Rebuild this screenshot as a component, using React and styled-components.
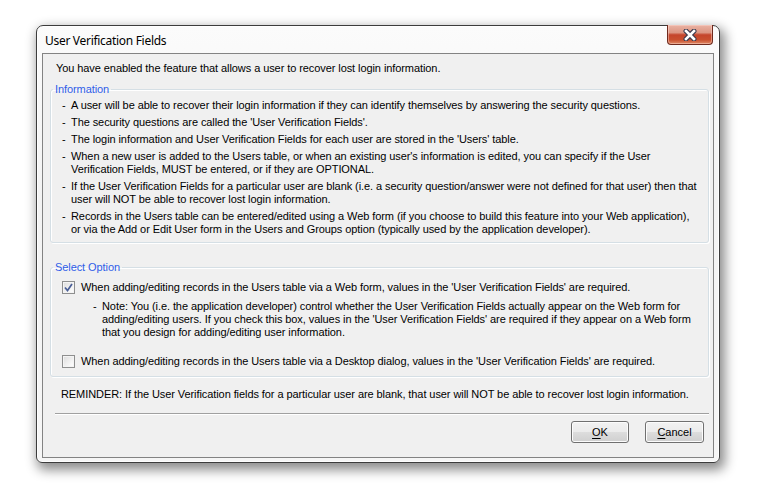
import React from 'react';
import styled, { createGlobalStyle } from 'styled-components';

const GlobalStyle = createGlobalStyle`
  html, body {
    margin: 0;
    padding: 0;
    background: #ffffff;
  }
  body {
    font-family: "Liberation Sans", Arial, sans-serif;
    font-size: 11px;
    letter-spacing: -0.08px;
    color: #000;
  }
`;

const Page = styled.div`
  box-sizing: border-box;
  width: 765px;
  height: 494px;
  padding: 25px 0 0 36px;
  background: #ffffff;
`;

const Window = styled.div`
  box-sizing: border-box;
  width: 684px;
  border: 1px solid #3c3c3c;
  border-radius: 7px 7px 6px 6px;
  background: linear-gradient(#fbfbfb, #f3f3f3 40%, #f6f6f6);
  box-shadow: inset 0 0 0 1px rgba(255, 255, 255, 0.9),
    3px 5px 12px 2px rgba(0, 0, 0, 0.45);
  padding-bottom: 4px;
`;

const TitleBar = styled.div`
  display: flex;
  align-items: flex-start;
  height: 27px;
  padding-left: 8px;
`;

const Title = styled.div`
  margin-top: 7px;
  font-family: "Noto Sans", "Liberation Sans", sans-serif;
  font-size: 12px;
  letter-spacing: -0.3px;
  line-height: 15px;
  color: #000;
`;

const CloseButton = styled.div`
  display: flex;
  align-items: center;
  justify-content: center;
  width: 46px;
  height: 20px;
  margin: -1px 6px 0 auto;
  box-sizing: border-box;
  border: 1px solid #6e2a1e;
  border-top: none;
  border-radius: 0 0 4px 4px;
  background: linear-gradient(
    #eab3a4 0%,
    #dc9683 40%,
    #c5452c 52%,
    #c9502f 78%,
    #e08a66 100%
  );
  box-shadow: inset 0 0 0 1px rgba(255, 220, 210, 0.45);
`;

const Client = styled.div`
  display: flex;
  flex-direction: column;
  margin: 0 5px;
  border: 1px solid #838383;
  background: #f0f0f0;
  padding: 8px 4px 14px 7px;
`;

const Intro = styled.div`
  padding-left: 6px;
  line-height: 13px;
`;

const Group = styled.fieldset`
  margin: ${(p) => p.$top}px 0 0 0;
  padding: ${(p) => p.$pad};
  border: 1px solid #d5dfe5;
  border-radius: 3px;
  box-shadow: inset 1px 1px 0 #ffffff, 1px 1px 0 #ffffff;
  display: flex;
  flex-direction: column;
`;

const Legend = styled.legend`
  margin-left: -9px;
  padding: 0 2px;
  line-height: 13px;
  color: #2f5ee8;
`;

const ItemList = styled.div`
  display: flex;
  flex-direction: column;
  gap: 4px;
`;

const Item = styled.div`
  display: flex;
  line-height: 13px;
  margin-left: ${(p) => p.$indent || 0}px;
  margin-top: ${(p) => p.$top || 0}px;
`;

const Dash = styled.span`
  flex: none;
  width: 9px;
`;

const OptionRow = styled.label`
  display: flex;
  align-items: center;
  gap: 6px;
  line-height: 13px;
  margin-top: ${(p) => p.$top}px;
`;

const Box = styled.span`
  flex: none;
  box-sizing: border-box;
  width: 13px;
  height: 13px;
  border: 1px solid #8e8f8f;
  background: linear-gradient(135deg, #dcdcdc, #f6f6f6 70%, #ffffff);
  box-shadow: inset 0 0 0 1px #f4f4f4;
  display: flex;
  align-items: center;
  justify-content: center;
`;

const Reminder = styled.div`
  margin-top: 11px;
  padding-left: 11px;
  line-height: 13px;
`;

const Separator = styled.div`
  margin: 12px 0 6px 5px;
  height: 1px;
  background: #a0a0a0;
  border-bottom: 1px solid #ffffff;
`;

const ButtonRow = styled.div`
  display: flex;
  justify-content: flex-end;
  gap: 16px;
  padding-right: 5px;
`;

const Button = styled.button`
  box-sizing: border-box;
  width: ${(p) => p.$w}px;
  height: 22px;
  padding: 0;
  border: 1px solid #707070;
  border-radius: 3px;
  background: linear-gradient(#f2f2f2 0%, #ebebeb 50%, #dddddd 51%, #cfcfcf 100%);
  box-shadow: inset 0 0 0 1px #fcfcfc;
  font-family: "Liberation Sans", Arial, sans-serif;
  font-size: 11px;
  color: #000;
  & u {
    text-underline-offset: 2px;
  }
`;

const CloseGlyph = () => (
  <svg width="14" height="12" viewBox="0 0 14 12">
    <path d="M3 2 L11 10 M11 2 L3 10" stroke="#3b3b4f" strokeWidth="5" strokeLinecap="round" />
    <path d="M3 2 L11 10 M11 2 L3 10" stroke="#ffffff" strokeWidth="2.6" strokeLinecap="square" />
  </svg>
);

const Checkbox = ({ checked }) => (
  <Box>
    {checked && (
      <svg width="9" height="9" viewBox="0 0 9 9">
        <path d="M1 4.5 L3.5 7.5 L8 1" fill="none" stroke="#4a5f97" strokeWidth="1.7" />
      </svg>
    )}
  </Box>
);

const infoItems = [
  'A user will be able to recover their login information if they can identify themselves by answering the security questions.',
  "The security questions are called the 'User Verification Fields'.",
  "The login information and User Verification Fields for each user are stored in the 'Users' table.",
  "When a new user is added to the Users table, or when an existing user's information is edited, you can specify if the User Verification Fields, MUST be entered, or if they are OPTIONAL.",
  'If the User Verification Fields for a particular user are blank (i.e. a security question/answer were not defined for that user) then that user will NOT be able to recover lost login information.',
  'Records in the Users table can be entered/edited using a Web form (if you choose to build this feature into your Web application), or via the Add or Edit User form in the Users and Groups option (typically used by the application developer).',
];

export default function App() {
  return (
    <Page>
      <GlobalStyle />
      <Window>
        <TitleBar>
          <Title>User Verification Fields</Title>
          <CloseButton>
            <CloseGlyph />
          </CloseButton>
        </TitleBar>
        <Client>
          <Intro>You have enabled the feature that allows a user to recover lost login information.</Intro>

          <Group $top={8} $pad="3px 8px 6px 11px">
            <Legend>Information</Legend>
            <ItemList>
              {infoItems.map((t) => (
                <Item key={t}>
                  <Dash>-</Dash>
                  <span>{t}</span>
                </Item>
              ))}
            </ItemList>
          </Group>

          <Group $top={18} $pad="0 8px 8px 11px">
            <Legend>Select Option</Legend>
            <OptionRow $top={7}>
              <Checkbox checked />
              <span>When adding/editing records in the Users table via a Web form, values in the 'User Verification Fields' are required.</span>
            </OptionRow>
            <Item $indent={31} $top={6}>
              <Dash>-</Dash>
              <span>
                Note: You (i.e. the application developer) control whether the User Verification Fields actually appear on the Web form for adding/editing users. If you check this box, values in the 'User Verification Fields' are required if they appear on a Web form that you design for adding/editing user information.
              </span>
            </Item>
            <OptionRow $top={16}>
              <Checkbox />
              <span>When adding/editing records in the Users table via a Desktop dialog, values in the 'User Verification Fields' are required.</span>
            </OptionRow>
          </Group>

          <Reminder>REMINDER: If the User Verification fields for a particular user are blank, that user will NOT be able to recover lost login information.</Reminder>
          <Separator />
          <ButtonRow>
            <Button $w={58}>
              <u>O</u>K
            </Button>
            <Button $w={59}>
              <u>C</u>ancel
            </Button>
          </ButtonRow>
        </Client>
      </Window>
    </Page>
  );
}
